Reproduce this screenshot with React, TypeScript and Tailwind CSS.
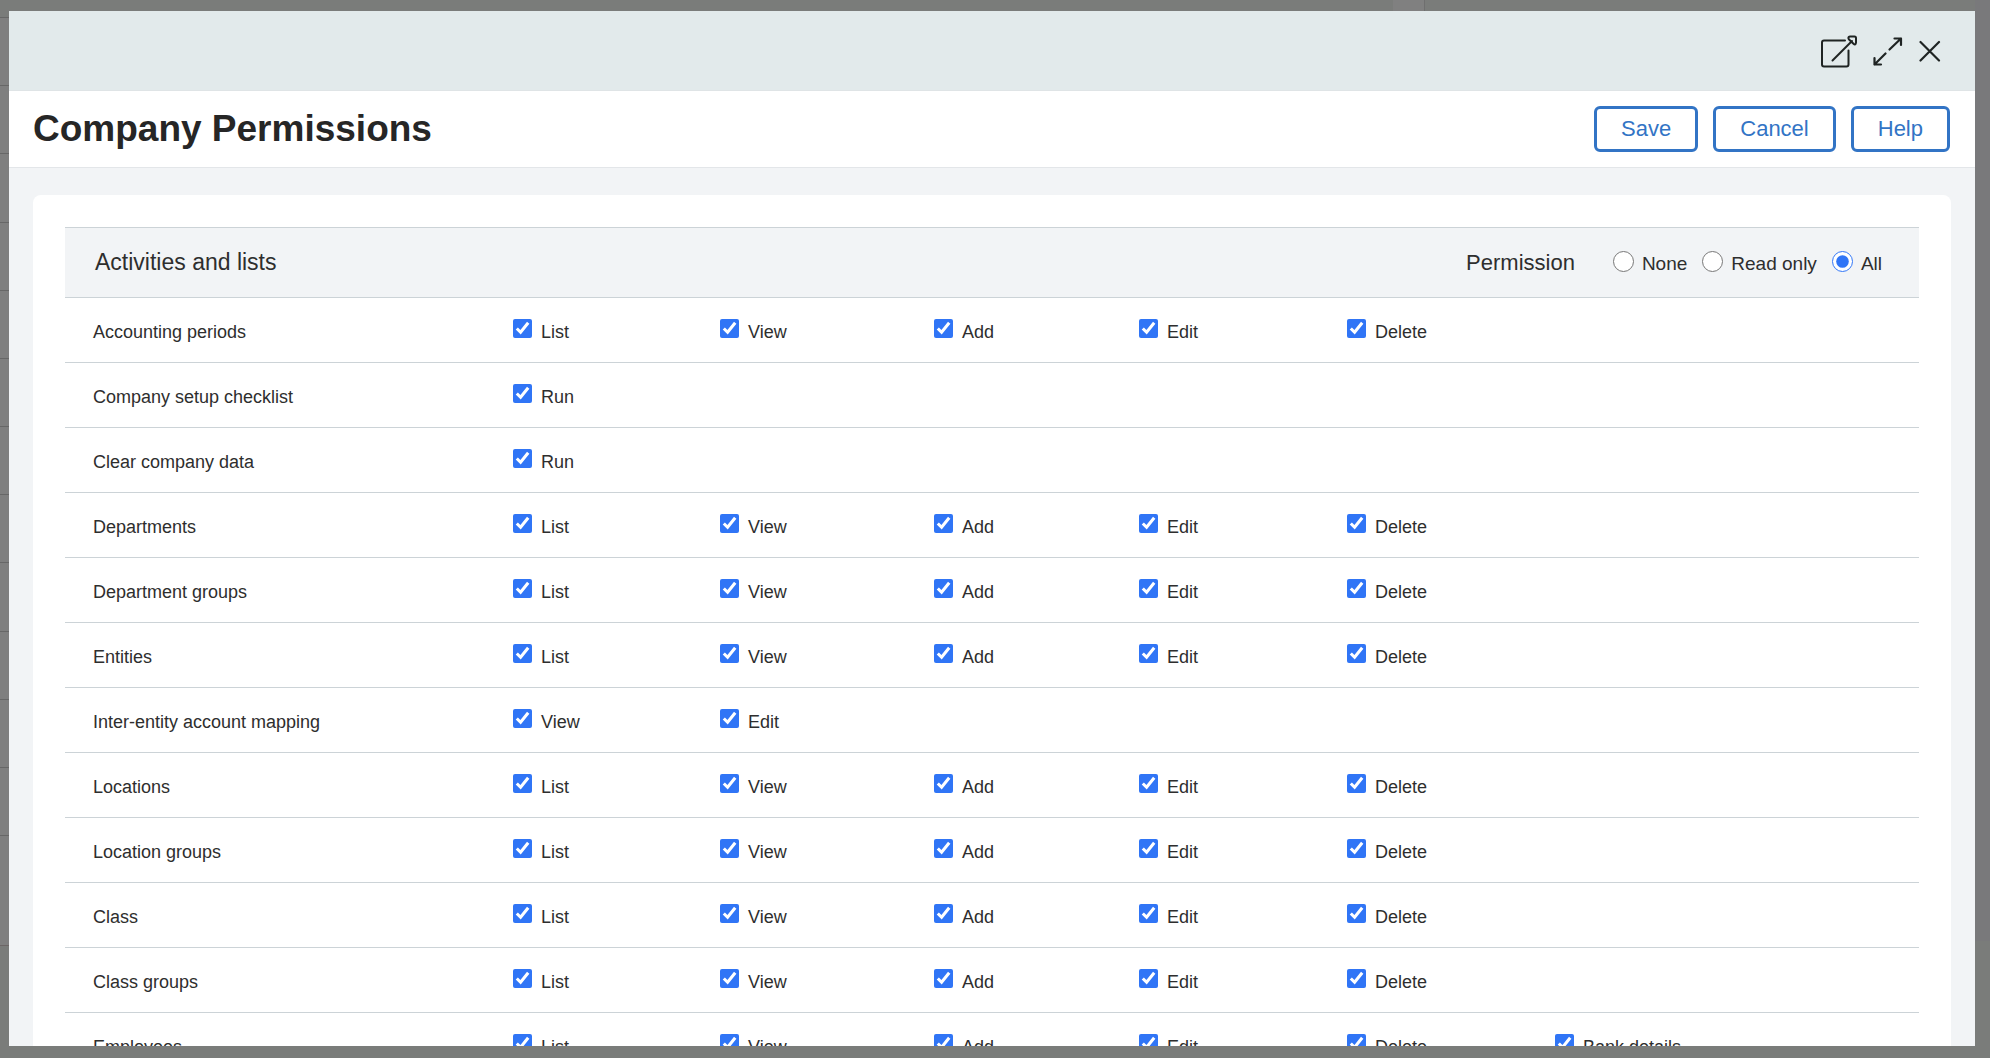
import { useState } from 'react';

type Row = { name: string; actions: string[] };

const CRUD = ['List', 'View', 'Add', 'Edit', 'Delete'];

const rows: Row[] = [
  { name: 'Accounting periods', actions: CRUD },
  { name: 'Company setup checklist', actions: ['Run'] },
  { name: 'Clear company data', actions: ['Run'] },
  { name: 'Departments', actions: CRUD },
  { name: 'Department groups', actions: CRUD },
  { name: 'Entities', actions: CRUD },
  { name: 'Inter-entity account mapping', actions: ['View', 'Edit'] },
  { name: 'Locations', actions: CRUD },
  { name: 'Location groups', actions: CRUD },
  { name: 'Class', actions: CRUD },
  { name: 'Class groups', actions: CRUD },
  { name: 'Employees', actions: [...CRUD, 'Bank details'] },
];

const levels = ['None', 'Read only', 'All'];

function PopOutIcon() {
  return (
    <svg width="36" height="34" viewBox="1 0 36 34" fill="none" stroke="#1f2423" strokeWidth="2" strokeLinecap="round" strokeLinejoin="round">
      <path d="M25 6.500H4Q2 6.500 2 8.500V30.500Q2 32.500 4 32.500H26.500Q28.500 32.500 28.500 30.500V16.500" />
      <path d="M12.500 26.500L32 7" />
      <path d="M30 2.500H34.500Q36 2.500 36 4V8.500Q35.500 11.500 33.500 9.800L28.800 5.200Q27.500 3 30 2.500Z" />
    </svg>
  );
}

function ExpandIcon() {
  return (
    <svg width="30" height="30" viewBox="0 0 30 30" fill="none" stroke="#1f2423" strokeWidth="2.2" strokeLinecap="round" strokeLinejoin="round">
      <path d="M16.500 13.500L28 2.500M21.500 2.500H28V9" />
      <path d="M12.500 17.500L1.500 28.500M1.500 22V28.500H8" />
    </svg>
  );
}

function CloseIcon() {
  return (
    <svg width="22" height="22" viewBox="0 0 22 22" fill="none" stroke="#1f2423" strokeWidth="2.2" strokeLinecap="round">
      <path d="M1.500 2L20 20.500M20 2L1.500 20.500" />
    </svg>
  );
}

// The dimmed page that shows around the dialog
function Backdrop() {
  return (
    <div aria-hidden="true" className="absolute inset-0 overflow-hidden">
      <div className="absolute top-0 right-0 h-[941px] w-[15px] bg-[#79797b]" />
      <div className="absolute top-0 left-[70%] h-[11px] w-8 border-r border-[#6f6f6f] bg-[#808080]" />
      <div className="absolute top-[17px] left-0 flex h-[929px] w-[9px] flex-col border-b border-[#6c6666] bg-[#7f7f7f]">
        {Array.from({ length: 12 }, (_, i) => (
          <div key={i} className="grow border-t border-[#676767]" />
        ))}
        <div className="h-[110px] border-t border-[#676767]" />
      </div>
    </div>
  );
}

function ActionCheckbox({ label }: { label: string }) {
  return (
    <label className="flex items-start gap-[9px] whitespace-nowrap">
      <input type="checkbox" defaultChecked className="size-[19px] accent-[#3075f6]" />
      <span className="pt-[3px] leading-5">{label}</span>
    </label>
  );
}

export default function App() {
  const [level, setLevel] = useState('All');

  return (
    <div className="relative h-screen bg-[#7a7c7a] pt-[11px] pr-[15px] pb-3 pl-[9px] font-['Liberation_Sans',Arial,sans-serif] text-[#2e2e2e]">
      <Backdrop />
      <div role="dialog" aria-labelledby="dialog-title" className="relative flex h-full flex-col overflow-hidden bg-[#f2f4f6]">
        <div className="flex h-20 shrink-0 items-center justify-end gap-4 border-b border-[#dfe4e6] bg-[#e2eaeb] pr-[34px]">
          <button type="button" aria-label="Open in new window">
            <PopOutIcon />
          </button>
          <button type="button" aria-label="Expand">
            <ExpandIcon />
          </button>
          <button type="button" aria-label="Close">
            <CloseIcon />
          </button>
        </div>

        <header className="flex h-[77px] shrink-0 items-center justify-between border-b border-[#e3e6e9] bg-white pr-[25px] pl-6">
          <h1 id="dialog-title" className="text-[37px] leading-10 font-bold text-[#262626]">Company Permissions</h1>
          <div className="flex gap-[15px]">
            {['Save', 'Cancel', 'Help'].map((label) => (
              <button
                key={label}
                type="button"
                className="h-[46px] rounded-md border-3 border-[#3274c5] bg-white px-6 text-[22px] leading-6 text-[#3274c5]"
              >
                {label}
              </button>
            ))}
          </div>
        </header>

        <main className="grow overflow-y-auto px-6 pt-[27px] [scrollbar-width:none]">
          <section className="rounded-lg bg-white p-8">
            <div className="flex h-[71px] items-center justify-between border-y border-[#ccd3d7] bg-[#f2f4f6] pr-[37px] pl-[30px]">
              <h2 className="text-[23px]">Activities and lists</h2>
              <fieldset className="flex items-center">
                <legend className="float-left mr-[38px] text-[22px]">Permission</legend>
                <div className="flex gap-[15px]">
                  {levels.map((item) => (
                    <label key={item} className="flex items-start gap-2 text-[19px]">
                      <input
                        type="radio"
                        name="permission"
                        checked={level === item}
                        onChange={() => setLevel(item)}
                        className="size-[21px] accent-[#3075f6]"
                      />
                      <span className="pt-[3px] leading-5">{item}</span>
                    </label>
                  ))}
                </div>
              </fieldset>
            </div>

            <table className="w-full table-fixed border-separate border-spacing-0 text-left text-lg">
              <colgroup>
                <col className="w-[448px]" />
                <col className="w-[207px]" />
                <col className="w-[214px]" />
                <col className="w-[205px]" />
                <col className="w-[208px]" />
                <col className="w-[208px]" />
                <col />
              </colgroup>
              <tbody>
                {rows.map((row) => (
                  <tr key={row.name} className="h-[65px]">
                    <th scope="row" className="border-b border-[#ccd3d7] pt-[3px] pl-7 font-normal">{row.name}</th>
                    {row.actions.map((action, i) => (
                      <td
                        key={action}
                        colSpan={i === row.actions.length - 1 ? 7 - row.actions.length : 1}
                        className="border-b border-[#ccd3d7]"
                      >
                        <ActionCheckbox label={action} />
                      </td>
                    ))}
                  </tr>
                ))}
              </tbody>
            </table>
          </section>
        </main>
      </div>
    </div>
  );
}
